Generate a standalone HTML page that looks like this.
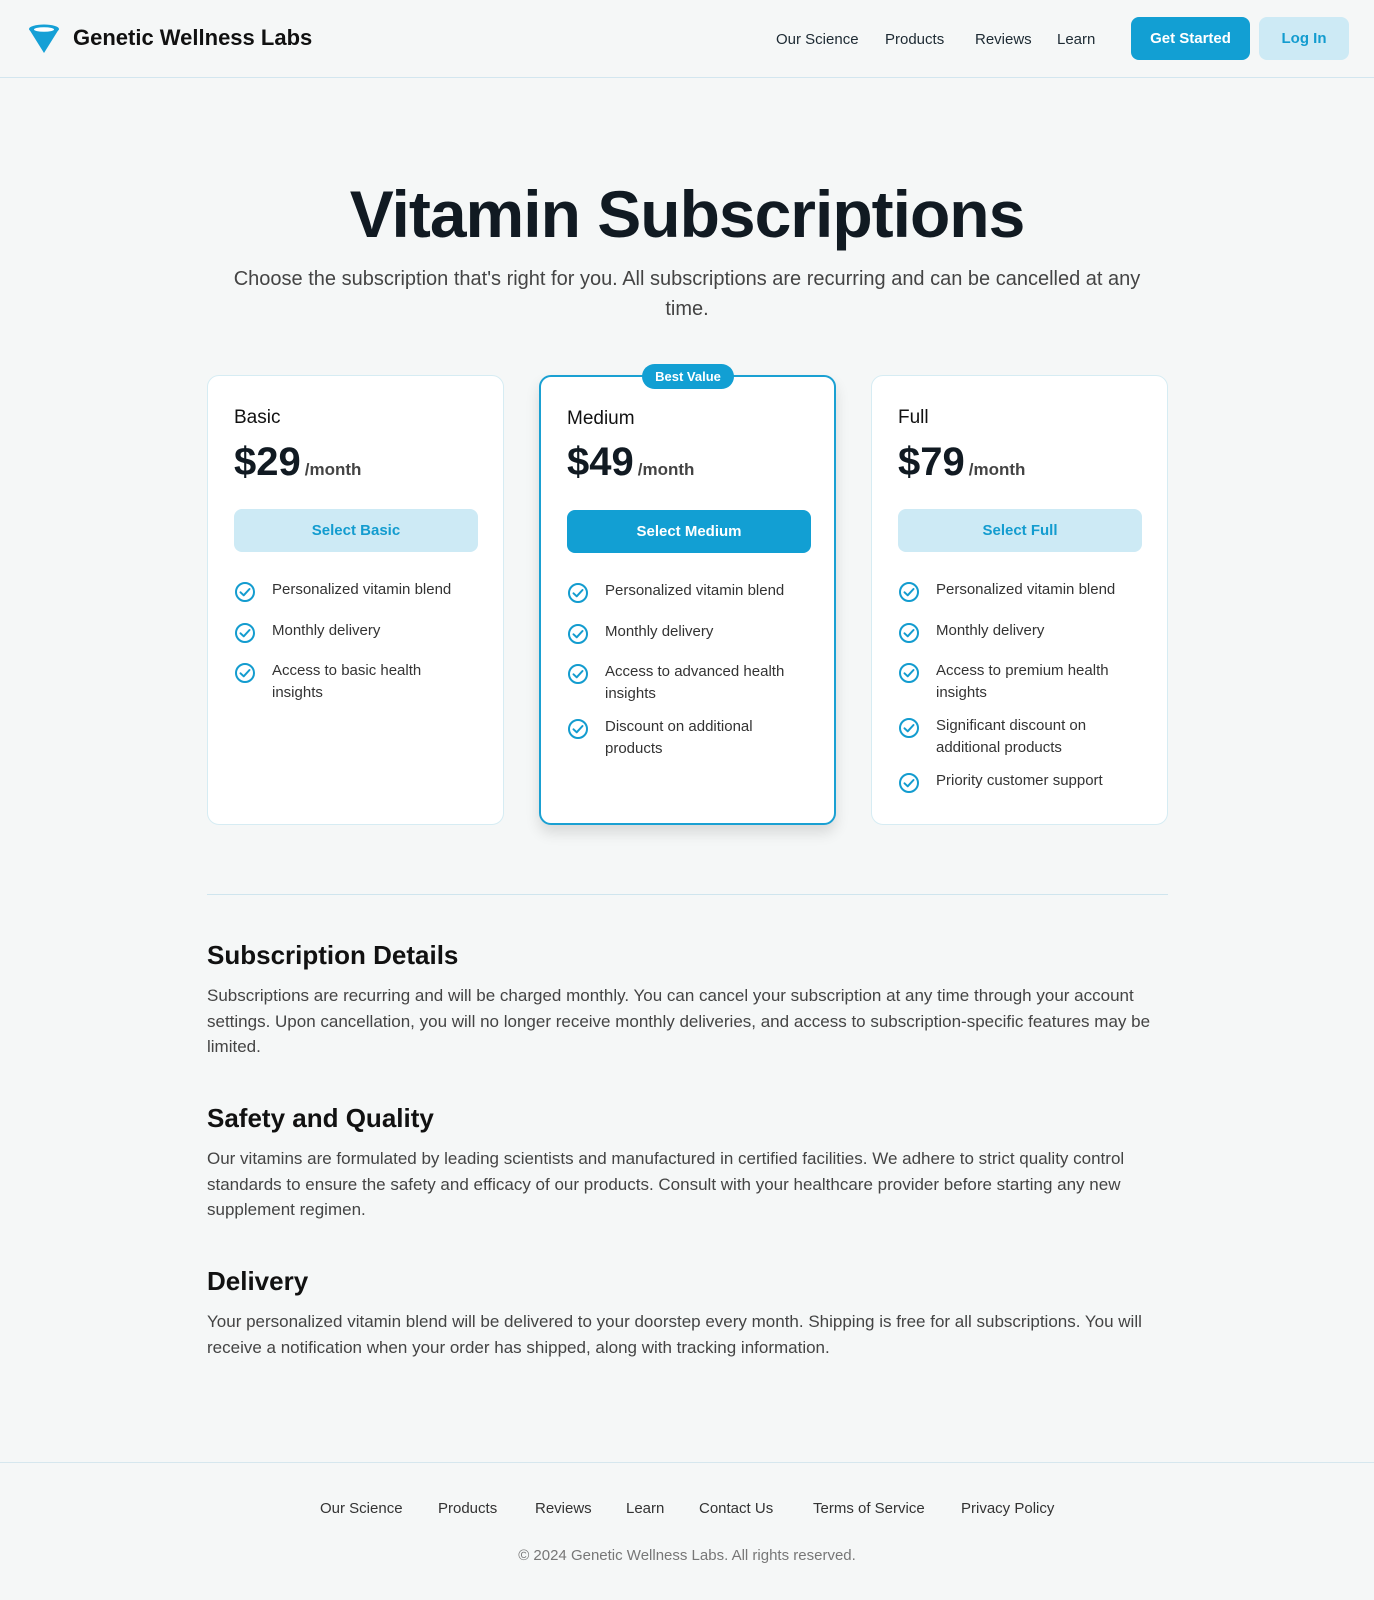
<!DOCTYPE html>
<html><head><meta charset="utf-8">
<style>
*{box-sizing:border-box;margin:0;padding:0}
body{width:1374px;height:1600px;background:#f5f7f7;font-family:"Liberation Sans",sans-serif;color:#111a22;position:relative;overflow:hidden}
.a{position:absolute;white-space:nowrap}
header{position:absolute;left:0;top:0;width:1374px;height:78px;border-bottom:1px solid #d3e6ef}
.nav{font-size:15px;color:#1d2a33;top:31px}
.btn{position:absolute;border-radius:8px;font-size:15px;font-weight:bold;display:flex;align-items:center;justify-content:center}
.card{position:absolute;top:375px;width:297px;height:450px;background:#fff;border:1px solid #d6ecf3;border-radius:12px}
.card.m{border:2px solid #1aa0d2;box-shadow:0 8px 14px rgba(0,0,0,.12)}
.card h3{position:absolute;left:26px;top:31px;font-size:19px;font-weight:normal;color:#111}
.price{position:absolute;left:26px;top:64px;font-size:40px;font-weight:bold;color:#111a22}
.price span{font-size:17px;font-weight:bold;color:#444;margin-left:4px}
.card .btn{left:26px;top:133px;width:244px;height:43px}
.light{background:#cdeaf5;color:#139ccf}
.dark{background:#129fd3;color:#fff}
ul{position:absolute;left:26px;top:203px;list-style:none;width:222px}
li{position:relative;padding-left:38px;font-size:15px;line-height:21.5px;color:#333;margin-bottom:12px}
li svg{position:absolute;left:1px;top:3px}
.sec h2{font-size:26px;font-weight:bold;color:#111;margin-bottom:12px}
.sec p{font-size:17px;line-height:25.6px;color:#444}
.f{top:1500px;font-size:15px;color:#333}
</style></head><body>
<header>
<svg class="a" style="left:28px;top:24px" width="32" height="30" viewBox="0 0 32 30"><path d="M1 5 L16 29 L31 5 Z" fill="#15a0d6"/><ellipse cx="16" cy="5" rx="15" ry="4.5" fill="#15a0d6"/><ellipse cx="16" cy="5.5" rx="10" ry="2.3" fill="#fff"/></svg>
<div class="a" style="left:73px;top:25px;font-size:22px;font-weight:bold;color:#111">Genetic Wellness Labs</div>
<div class="a nav" style="left:776px">Our Science</div>
<div class="a nav" style="left:885px">Products</div>
<div class="a nav" style="left:975px">Reviews</div>
<div class="a nav" style="left:1057px">Learn</div>
<div class="btn dark" style="left:1131px;top:17px;width:119px;height:43px">Get Started</div>
<div class="btn light" style="left:1259px;top:17px;width:90px;height:43px">Log In</div>
</header>

<div class="a" style="left:0;width:1374px;text-align:center;top:176px;font-size:66px;font-weight:bold;color:#111a22;letter-spacing:-1px">Vitamin Subscriptions</div>
<div class="a" style="left:227px;width:920px;white-space:normal;text-align:center;top:264px;font-size:20px;line-height:30px;color:#444">Choose the subscription that's right for you. All subscriptions are recurring and can be cancelled at any time.</div>

<svg width="0" height="0" style="position:absolute"><defs><g id="ck"><circle cx="10" cy="10" r="9" fill="none" stroke="#139ccf" stroke-width="2"/><path d="M5.5 10.3 L8.7 13.3 L14.5 7" fill="none" stroke="#139ccf" stroke-width="2" stroke-linecap="round" stroke-linejoin="round"/></g></defs></svg>

<div class="card" style="left:207px">
<h3>Basic</h3><div class="price">$29<span>/month</span></div>
<div class="btn light">Select Basic</div>
<ul>
<li><svg width="20" height="20"><use href="#ck"/></svg>Personalized vitamin blend</li>
<li style="margin-top:19px"><svg width="20" height="20"><use href="#ck"/></svg>Monthly delivery</li>
<li style="margin-top:19px"><svg width="20" height="20"><use href="#ck"/></svg>Access to basic health insights</li>
</ul></div>

<div class="card m" style="left:539px">
<div class="a" style="left:101px;top:-13px;width:92px;height:25px;border-radius:13px;background:#129fd3;color:#fff;font-size:13px;font-weight:bold;text-align:center;line-height:25px">Best Value</div>
<h3 style="left:26px;top:31px">Medium</h3><div class="price" style="top:63px">$49<span>/month</span></div>
<div class="btn dark" style="top:133px">Select Medium</div>
<ul style="top:203px">
<li><svg width="20" height="20"><use href="#ck"/></svg>Personalized vitamin blend</li>
<li style="margin-top:19px"><svg width="20" height="20"><use href="#ck"/></svg>Monthly delivery</li>
<li style="margin-top:19px"><svg width="20" height="20"><use href="#ck"/></svg>Access to advanced health insights</li>
<li style="margin-top:12px"><svg width="20" height="20"><use href="#ck"/></svg>Discount on additional products</li>
</ul></div>

<div class="card" style="left:871px">
<h3>Full</h3><div class="price">$79<span>/month</span></div>
<div class="btn light">Select Full</div>
<ul>
<li><svg width="20" height="20"><use href="#ck"/></svg>Personalized vitamin blend</li>
<li style="margin-top:19px"><svg width="20" height="20"><use href="#ck"/></svg>Monthly delivery</li>
<li style="margin-top:19px"><svg width="20" height="20"><use href="#ck"/></svg>Access to premium health insights</li>
<li style="margin-top:12px"><svg width="20" height="20"><use href="#ck"/></svg>Significant discount on additional products</li>
<li style="margin-top:12px"><svg width="20" height="20"><use href="#ck"/></svg>Priority customer support</li>
</ul></div>

<div class="a" style="left:207px;top:894px;width:961px;height:1px;background:#cfe5ee"></div>

<div class="a sec" style="left:207px;top:940px;width:961px;white-space:normal">
<h2>Subscription Details</h2>
<p>Subscriptions are recurring and will be charged monthly. You can cancel your subscription at any time through your account settings. Upon cancellation, you will no longer receive monthly deliveries, and access to subscription-specific features may be limited.</p>
</div>
<div class="a sec" style="left:207px;top:1103px;width:961px;white-space:normal">
<h2>Safety and Quality</h2>
<p>Our vitamins are formulated by leading scientists and manufactured in certified facilities. We adhere to strict quality control standards to ensure the safety and efficacy of our products. Consult with your healthcare provider before starting any new supplement regimen.</p>
</div>
<div class="a sec" style="left:207px;top:1266px;width:961px;white-space:normal">
<h2>Delivery</h2>
<p>Your personalized vitamin blend will be delivered to your doorstep every month. Shipping is free for all subscriptions. You will receive a notification when your order has shipped, along with tracking information.</p>
</div>

<div class="a" style="left:0;top:1462px;width:1374px;height:1px;background:#d6e7ee"></div>
<div class="a f" style="left:320px">Our Science</div>
<div class="a f" style="left:438px">Products</div>
<div class="a f" style="left:535px">Reviews</div>
<div class="a f" style="left:626px">Learn</div>
<div class="a f" style="left:699px">Contact Us</div>
<div class="a f" style="left:813px">Terms of Service</div>
<div class="a f" style="left:961px">Privacy Policy</div>
<div class="a" style="left:0;width:1374px;text-align:center;top:1547px;font-size:15px;color:#777">© 2024 Genetic Wellness Labs. All rights reserved.</div>
</body></html>
